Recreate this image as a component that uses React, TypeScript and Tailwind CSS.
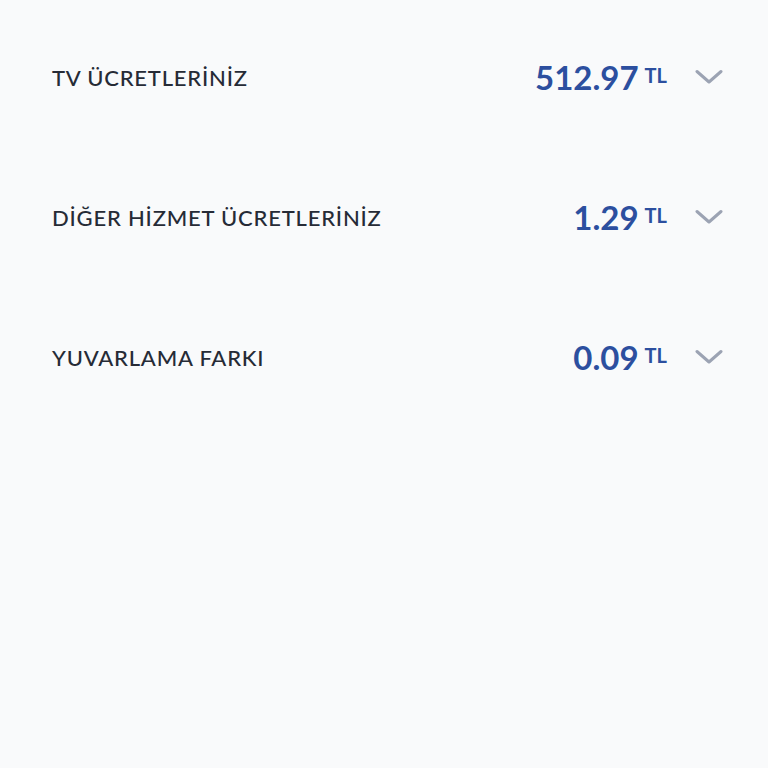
const rows = [
  { label: "TV ÜCRETLERİNİZ", amount: "512.97" },
  { label: "DİĞER HİZMET ÜCRETLERİNİZ", amount: "1.29" },
  { label: "YUVARLAMA FARKI", amount: "0.09" },
];

function Chevron() {
  return (
    <svg width="28" height="16" viewBox="0 0 28 16" fill="none" className="shrink-0">
      <path d="M2 2.5 L14 13 L26 2.5" stroke="#9ca3b3" strokeWidth="3" strokeLinecap="round" strokeLinejoin="round" />
    </svg>
  );
}

export default function App() {
  return (
    <div
      className="w-[768px] h-[768px] bg-[#f9fafb] pt-[47px] pl-[52px] pr-[45px]"
      style={{ fontFamily: "Lato, 'Noto Sans', sans-serif" }}
    >
      {rows.map((r) => (
        <div key={r.label} className="h-[140px] flex items-start">
          <div className="h-[60px] flex items-center w-full">
            <span className="flex-1 text-[22px] font-medium text-[#262b36] tracking-[0.8px]">
              {r.label}
            </span>
            <div className="flex items-start">
              <span className="text-[33px] font-bold leading-none text-[#2c4f9f]">
                {r.amount}
              </span>
              <span className="ml-[6px] mt-[4px] text-[20px] font-bold leading-none text-[#2c4f9f]">
                TL
              </span>
            </div>
            <div className="ml-[28px]">
              <Chevron />
            </div>
          </div>
        </div>
      ))}
    </div>
  );
}
